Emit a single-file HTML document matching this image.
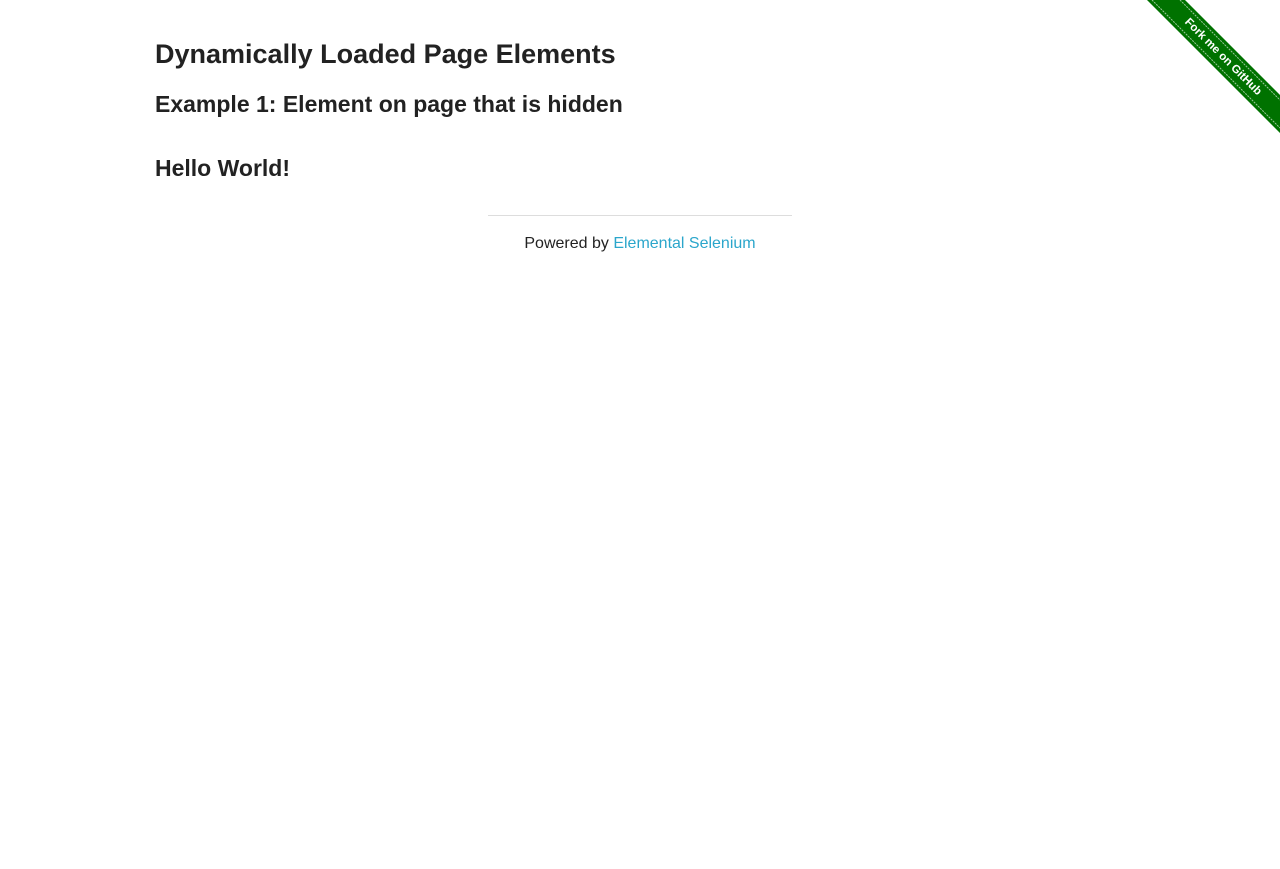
<!DOCTYPE html>
<html><head><meta charset="utf-8"><style>
body{margin:0;background:#fff;font-family:"Liberation Sans",Arial,sans-serif;color:#222;width:1280px;height:869px;position:relative;overflow:hidden}
.t{position:absolute;left:155px;margin:0;font-weight:bold;white-space:nowrap}
#h3{top:39px;font-size:27px}
#h4{top:91px;font-size:23px}
#hw{top:155px;font-size:23px}
hr{position:absolute;left:488px;top:215px;width:304px;margin:0;border:0;border-top:1px solid #ddd}
#ft{position:absolute;top:235px;left:0;width:1280px;text-align:center;font-size:16px;color:#222}
#ft a{color:#2ba6cb;text-decoration:none}
</style></head><body>
<h3 class="t" id="h3">Dynamically Loaded Page Elements</h3>
<h4 class="t" id="h4">Example 1: Element on page that is hidden</h4>
<h4 class="t" id="hw">Hello World!</h4>
<hr>
<div id="ft">Powered by <a>Elemental Selenium</a></div>
<svg style="position:absolute;left:0;top:0" width="1280" height="869">
<polygon points="1147,0 1185,0 1280,95 1280,133" fill="#007200"/>
<line x1="1152" y1="0" x2="1280" y2="128" stroke="#fff" stroke-opacity=".6" stroke-width="1" stroke-dasharray="2,1"/>
<line x1="1180" y1="0" x2="1280" y2="100" stroke="#fff" stroke-opacity=".6" stroke-width="1" stroke-dasharray="2,1"/>
<text x="0" y="0" transform="translate(1223,57) rotate(45)" text-anchor="middle" dominant-baseline="middle" fill="#fff" font-family="Liberation Sans,sans-serif" font-weight="bold" font-size="11.5">Fork me on GitHub</text>
</svg>
</body></html>
